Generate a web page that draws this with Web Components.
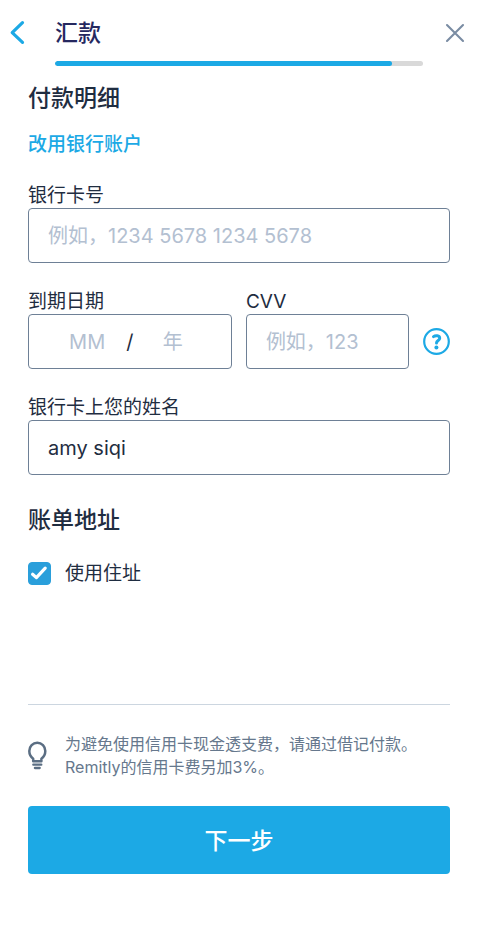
<!DOCTYPE html>
<html lang="zh-CN">
<head>
<meta charset="utf-8">
<meta name="viewport" content="width=device-width, initial-scale=1">
<title>汇款</title>
<style>
:root {
  --blue: #1ca9e5;
  --ink: #1f2d41;
  --navy: #25285f;
  --slate: #66788d;
  --hint: #b3c0d1;
}
body {
  margin: 0;
  background: #fff;
  color: var(--ink);
  font-family: Inter, "Noto Sans CJK SC", sans-serif;
}
</style>
</head>
<body>
<payment-page></payment-page>

<script>
const define = (name, html, setup) => {
  const template = document.createElement('template');
  template.innerHTML = html;
  customElements.define(name, class extends HTMLElement {
    constructor() {
      super();
      this.attachShadow({ mode: 'open' }).append(template.content.cloneNode(true));
    }
    connectedCallback() {
      if (setup) setup(this, this.shadowRoot);
    }
  });
};

const fieldStyles = `
  :host { display: block; min-width: 0; }
  label { display: block; padding-top: 2px; font-size: 19px; line-height: 24px; }
  input {
    box-sizing: border-box; width: 100%; min-width: 0; margin: 0;
    font: inherit; font-size: 20px; color: inherit; background: none; border: 0; outline-offset: 2px;
  }
  input::placeholder { color: var(--hint); opacity: 1; }
  .box { box-sizing: border-box; height: 55px; border: 1px solid #6e8096; border-radius: 4px; }
`;

define('step-header', `
  <style>
    :host {
      display: grid; grid-template-columns: 55px 1fr 55px; row-gap: 11px;
      padding: 16px 0 0;
    }
    button { padding: 0; border: 0; background: none; height: 34px; cursor: pointer; display: flex; align-items: center; }
    .back { padding-left: 9px; }
    .close { justify-self: end; padding-right: 13px; }
    h1 { margin: 0; font-size: 23px; line-height: 34px; font-weight: 500; color: var(--navy); }
    .track { grid-column: 2; height: 5px; border-radius: 3px; background: #d9d9d9; overflow: hidden; }
    .fill { height: 100%; border-radius: 3px; background: var(--blue); }
    svg { display: block; }
  </style>
  <button class="back" type="button" aria-label="返回">
    <svg width="17" height="26" viewBox="0 0 17 26" fill="none" stroke="#1ca9e5" stroke-width="3.2" stroke-linecap="round" stroke-linejoin="round"><path d="M13.5 2.6 3.2 12.7l10.3 9.7"/></svg>
  </button>
  <h1><slot></slot></h1>
  <button class="close" type="button" aria-label="关闭">
    <svg width="20" height="20" viewBox="0 0 20 20" fill="none" stroke="#7a8ca3" stroke-width="2.1" stroke-linecap="round"><path d="M2 2 18 18M18 2 2 18"/></svg>
  </button>
  <div class="track" role="progressbar" aria-valuemin="0" aria-valuemax="12"><div class="fill"></div></div>
`, (host, root) => {
  const step = Number(host.getAttribute('step'));
  root.querySelector('.track').setAttribute('aria-valuenow', step);
  root.querySelector('.fill').style.width = step / 12 * 100 + '%';
});

define('section-title', `
  <style>
    :host { display: block; }
    h2 { margin: 0; font-size: 23px; line-height: 34px; font-weight: 500; }
  </style>
  <h2><slot></slot></h2>
`);

define('text-field', `
  <style>${fieldStyles} input { padding: 0 19px; }</style>
  <label for="control"><slot></slot></label>
  <input class="box" id="control" type="text">
`, (host, root) => {
  const input = root.querySelector('input');
  input.placeholder = host.getAttribute('placeholder') || '';
  input.value = host.getAttribute('value') || '';
});

define('expiry-field', `
  <style>
    ${fieldStyles}
    .box { display: grid; grid-template-columns: 1fr auto 1fr; align-items: center; padding: 0 19px; font-size: 20px; }
    input { height: 100%; padding: 0; text-align: center; }
  </style>
  <label for="month"><slot></slot></label>
  <div class="box">
    <input id="month" type="text" inputmode="numeric" placeholder="MM">
    <span>/</span>
    <input type="text" inputmode="numeric" placeholder="年" aria-label="年">
  </div>
`);

define('help-button', `
  <style>
    :host { display: block; }
    button { display: block; padding: 0; border: 0; background: none; cursor: pointer; }
    svg { display: block; }
  </style>
  <button type="button" aria-label="帮助">
    <svg width="27" height="27" viewBox="0 0 27 27" fill="none" stroke="#1ca9e5" stroke-linecap="round" stroke-linejoin="round">
      <circle cx="13.5" cy="13.5" r="12.3" stroke-width="2.2"/>
      <path d="M10.500 8.600c1.800-1.300 6.200-1.300 6.200 1.600 0 2.400-3.200 2.300-3.200 4.900" stroke-width="3"/>
      <circle cx="13.4" cy="19.6" r="2" fill="#1ca9e5" stroke="none"/>
    </svg>
  </button>
`);

define('check-field', `
  <style>
    :host { display: block; }
    label { display: flex; align-items: center; gap: 14px; font-size: 19px; line-height: 24px; }
    .text { padding-top: 2px; }
    .mark { display: grid; }
    .mark > * { grid-area: 1 / 1; }
    input { appearance: none; margin: 0; width: 23px; height: 23px; border-radius: 4px; border: 1px solid #6e8096; }
    input:checked { background: #2a9fdb; border-color: #2a9fdb; }
    svg { pointer-events: none; visibility: hidden; }
    input:checked + svg { visibility: visible; }
  </style>
  <label>
    <span class="mark">
      <input type="checkbox" checked>
      <svg width="23" height="23" viewBox="0 0 23 23" fill="none" stroke="#fff" stroke-width="3.2" stroke-linecap="round" stroke-linejoin="round"><path d="m4.6 12.2 3.8 3.4L17.2 6.2"/></svg>
    </span>
    <span class="text"><slot></slot></span>
  </label>
`);

define('fee-note', `
  <style>
    :host {
      display: grid; grid-template-columns: 20px 1fr; column-gap: 17px; align-items: center;
      padding-top: 28px; border-top: 1px solid #ccd6e0; color: var(--slate);
    }
    p { margin: 0; font-size: 16px; line-height: 23px; }
    svg { display: block; }
  </style>
  <svg width="20" height="30" viewBox="0 0 20 30" fill="none" stroke="#5b6e83">
    <path d="M5.200 20.200v-2.400C2.800 15.900 1.300 13.500 1.300 10a8 8.300 0 0 1 16 0c0 3.500-1.500 5.900-3.900 7.800v2.400Z" stroke-width="2.500" stroke-linejoin="round"/>
    <path d="M5.300 23.700h8M6.900 27h4.800" stroke-width="2.300" stroke-linecap="round"/>
  </svg>
  <p><slot></slot></p>
`);

define('primary-button', `
  <style>
    :host { display: block; }
    button {
      display: block; width: 100%; height: 68px; padding: 0 0 2px; border: 0; border-radius: 4px;
      background: var(--blue); color: #fff; font: inherit; font-size: 23px; font-weight: 500; cursor: pointer;
    }
  </style>
  <button type="button"><slot></slot></button>
`);

define('payment-page', `
  <style>
    :host { display: block; }
    main { padding: 15px 28px 70px; }
    a { display: block; width: fit-content; margin-top: 17px; font-size: 19px; line-height: 26px; font-weight: 500; color: var(--blue); text-decoration: none; }
    form { display: flex; flex-direction: column; gap: 25px; margin-top: 24px; }
    .row { display: grid; grid-template-columns: 5fr 4fr auto; column-gap: 14px; align-items: end; }
    help-button { margin-bottom: 14px; }
    .address { display: flex; flex-direction: column; gap: 23px; margin-top: 3px; }
    fee-note { margin-top: 93px; }
    primary-button { margin-top: 2px; }
  </style>
  <step-header step="11">汇款</step-header>
  <main>
    <section-title>付款明细</section-title>
    <a href="#bank">改用银行账户</a>
    <form>
      <text-field placeholder="例如，1234 5678 1234 5678">银行卡号</text-field>
      <div class="row">
        <expiry-field>到期日期</expiry-field>
        <text-field placeholder="例如，123">CVV</text-field>
        <help-button></help-button>
      </div>
      <text-field value="amy siqi">银行卡上您的姓名</text-field>
      <div class="address">
        <section-title>账单地址</section-title>
        <check-field>使用住址</check-field>
      </div>
      <fee-note>为避免使用信用卡现金透支费，请通过借记付款。<br>Remitly的信用卡费另加3%。</fee-note>
      <primary-button>下一步</primary-button>
    </form>
  </main>
`);
</script>
</body>
</html>
